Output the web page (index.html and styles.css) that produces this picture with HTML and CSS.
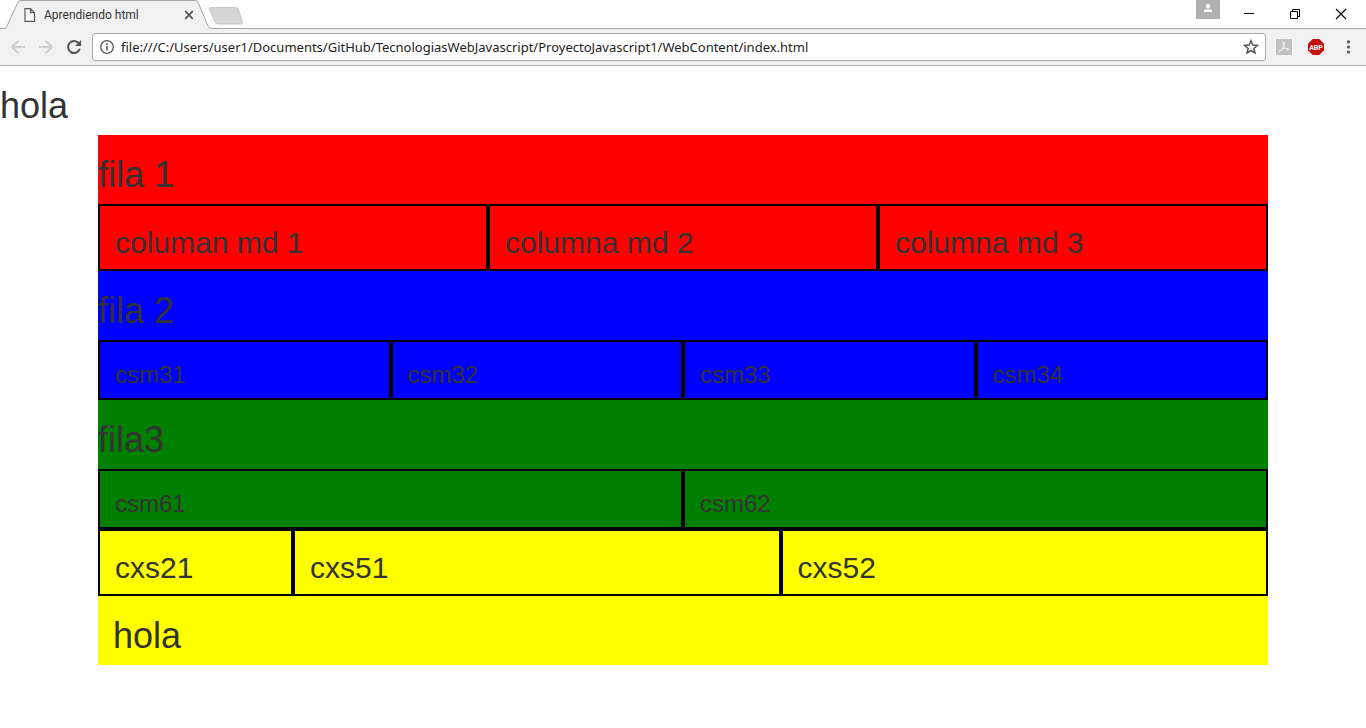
FILE: index.html
```
<!DOCTYPE html>
<html lang="es">
<head>
<meta charset="utf-8">
<title>Aprendiendo html</title>
<link rel="stylesheet" href="styles.css">
</head>
<body>
<header class="browser">
  <div class="tab-strip">
    <div class="tab">
      <svg class="tab-shape" viewBox="0 0 208 29" preserveAspectRatio="none" aria-hidden="true"><path d="M0 28.500C2 28.500 2.500 27 3 26L14 2Q15 .5 17 .5H191Q193 .5 194 2L204 26Q205 28.500 208 28.500V29H0Z" fill="#f1f1f1"/><path d="M0 28.500C2 28.500 2.500 27 3 26L14 2Q15 .5 17 .5H191Q193 .5 194 2L204 26Q205 28.500 208 28.500" fill="none" stroke="#a5a5a5"/></svg>
      <svg class="page-icon" width="12" height="14" viewBox="0 0 12 14" aria-hidden="true"><path d="M1 .7H6.500L10.500 4.700V13.300H1ZM6.500 .7V4.700H10.500" fill="#fafafa" stroke="#5a5a5a" stroke-width="1.200"/></svg>
      <span class="tab-title">Aprendiendo html</span>
      <button class="tab-close" aria-label="Cerrar pestaña"><svg width="10" height="10" viewBox="0 0 10 10"><path d="M1.200 1.200L8.800 8.800M8.800 1.200L1.200 8.800" stroke="#555" stroke-width="1.800"/></svg></button>
    </div>
    <button class="new-tab" aria-label="Nueva pestaña"><svg width="36" height="18" viewBox="0 0 36 18"><path d="M2.500 .5H27Q29.500 .5 30.300 2.500L34.500 15Q35 17 33 17H10Q8 17 7 15L1.500 2.500Q1 .5 2.500 .5Z" fill="#d5d5d5" stroke="#c6c6c6"/></svg></button>
    <div class="window-controls">
      <button class="profile" aria-label="Usuario"><svg width="24" height="19" viewBox="0 0 24 19"><circle cx="12" cy="6" r="2.200" fill="#fff"/><path d="M8 12V10.800Q8 9 12 9T16 10.800V12Z" fill="#fff"/></svg></button>
      <button class="win" aria-label="Minimizar"><svg width="12" height="12" viewBox="0 0 12 12"><path d="M1 5.500H11" stroke="#000"/></svg></button>
      <button class="win" aria-label="Restaurar"><svg width="12" height="12" viewBox="0 0 12 12"><path d="M1.500 3.500H8.500V10.500H1.500ZM3.500 3.500V1.500H10.500V8.500H8.500" fill="none" stroke="#000"/></svg></button>
      <button class="win" aria-label="Cerrar"><svg width="12" height="12" viewBox="0 0 12 12"><path d="M1 1L11 11M11 1L1 11" stroke="#000" stroke-width="1.100"/></svg></button>
    </div>
  </div>
  <div class="toolbar">
    <button class="tool" aria-label="Atrás"><svg width="16" height="16" viewBox="0 0 16 16"><path d="M15 8H2M8.500 1.500L2 8L8.500 14.500" fill="none" stroke="#d0d0d0" stroke-width="1.800"/></svg></button>
    <button class="tool" aria-label="Adelante"><svg width="16" height="16" viewBox="0 0 16 16"><path d="M1 8H14M7.500 1.500L14 8L7.500 14.500" fill="none" stroke="#d0d0d0" stroke-width="1.800"/></svg></button>
    <button class="tool" aria-label="Recargar"><svg width="16" height="16" viewBox="0 0 16 16"><path d="M12.800 4.300A6 6 0 1 0 13.800 9.800" fill="none" stroke="#555" stroke-width="2.100"/><path d="M15 1V7H9Z" fill="#555"/></svg></button>
    <div class="address">
      <svg width="16" height="16" viewBox="0 0 16 16" aria-hidden="true"><circle cx="8" cy="8" r="6.300" fill="none" stroke="#555" stroke-width="1.300"/><path d="M8 7V11.500M8 4.300V5.900" stroke="#555" stroke-width="1.600"/></svg>
      <input class="url" type="text" aria-label="Dirección" value="file:///C:/Users/user1/Documents/GitHub/TecnologiasWebJavascript/ProyectoJavascript1/WebContent/index.html">
      <button class="tool" aria-label="Añadir a marcadores"><svg width="16" height="16" viewBox="0 0 16 16"><path d="M8 1.800L9.800 6.100L14.400 6.400L10.900 9.400L12 14L8 11.500L4 14L5.100 9.400L1.600 6.400L6.200 6.100Z" fill="none" stroke="#555" stroke-width="1.500"/></svg></button>
    </div>
    <div class="extensions">
      <button class="tool" aria-label="Adobe Acrobat"><svg width="16" height="16" viewBox="0 0 16 16"><path d="M0 0H16V16H0Z" fill="#c2c2c2"/><path d="M7.500 3C9 3 8.200 6.500 6.500 9.500C5 12.300 3.300 13.500 3 12.500C2.800 11.300 6 9.800 9.500 9.500C12.500 9.200 13.500 10 13 10.700C12 11.800 9.500 9.800 8.200 7.500C6.900 5.300 6.500 3 7.500 3Z" fill="none" stroke="#f4f4f4"/></svg></button>
      <button class="tool" aria-label="Adblock Plus"><svg width="16" height="16" viewBox="0 0 16 16"><path d="M4.700 0H11.300L16 4.700V11.300L11.300 16H4.700L0 11.300V4.700Z" fill="#c50d0d"/><text x="8" y="11" text-anchor="middle" class="abp">ABP</text></svg></button>
      <button class="tool" aria-label="Menú"><svg width="16" height="16" viewBox="0 0 16 16"><g fill="#555"><circle cx="8.500" cy="2.800" r="1.600"/><circle cx="8.500" cy="8" r="1.600"/><circle cx="8.500" cy="13" r="1.600"/></g></svg></button>
    </div>
  </div>
</header>
<main class="page">
  <h1>hola</h1>
  <div class="container">
    <section class="red">
      <h1>fila 1</h1>
      <div class="row">
        <div class="col span-4"><h2>columan md 1</h2></div>
        <div class="col span-4"><h2>columna md 2</h2></div>
        <div class="col span-4"><h2>columna md 3</h2></div>
      </div>
    </section>
    <section class="blue">
      <h1>fila 2</h1>
      <div class="row">
        <div class="col span-3"><h3>csm31</h3></div>
        <div class="col span-3"><h3>csm32</h3></div>
        <div class="col span-3"><h3>csm33</h3></div>
        <div class="col span-3"><h3>csm34</h3></div>
      </div>
    </section>
    <section class="green">
      <h1>fila3</h1>
      <div class="row">
        <div class="col span-6"><h3>csm61</h3></div>
        <div class="col span-6"><h3>csm62</h3></div>
      </div>
    </section>
    <section class="yellow">
      <div class="row">
        <div class="col span-2"><h2>cxs21</h2></div>
        <div class="col span-5"><h2>cxs51</h2></div>
        <div class="col span-5"><h2>cxs52</h2></div>
      </div>
      <div class="plain"><h1>hola</h1></div>
    </section>
  </div>
</main>
</body>
</html>
```
FILE: styles.css
```
* { box-sizing: border-box; }

body {
  margin: 0;
  background: #fff;
  color: #333;
  font-family: "Liberation Sans", Arial, sans-serif;
}

button {
  display: flex;
  align-items: center;
  justify-content: center;
  padding: 0;
  border: 0;
  background: none;
}

svg { display: block; flex: none; }

/* Browser window */
.tab-strip {
  display: flex;
  height: 29px;
  padding-left: 4px;
  background: linear-gradient(#a5a5a5, #a5a5a5) bottom / 100% 1px no-repeat #fff;
}

.tab {
  position: relative;
  display: flex;
  align-items: center;
  width: 208px;
  padding: 0 18px 0 20px;
}

.tab-shape {
  position: absolute;
  inset: 0;
  width: 100%;
  height: 100%;
}

.page-icon, .tab-title, .tab-close { position: relative; }

.tab-title {
  flex: 1;
  padding-left: 8px;
  color: #333;
  font: 12px/16px Roboto, "Noto Sans", sans-serif;
  white-space: nowrap;
}

.new-tab { align-self: center; height: 18px; margin: 2px 0 0 -4px; }

.window-controls { display: flex; margin-left: auto; }

.profile {
  width: 24px;
  height: 19px;
  margin-right: 6px;
  background: #b0b0b0;
}

.win { width: 46px; height: 27px; }

.win:last-child { width: 48px; padding-right: 2px; }

.toolbar {
  display: flex;
  align-items: center;
  gap: 12px;
  height: 37px;
  padding: 0 10px;
  background: #f1f1f1;
  border-bottom: 1px solid #b0b0b0;
}

.address {
  display: flex;
  flex: 1;
  align-items: center;
  gap: 6px;
  height: 28px;
  margin-left: -2px;
  padding: 0 6px;
  background: #fff;
  border: 1px solid #a9a9a9;
  border-radius: 3px;
}

.url {
  flex: 1;
  min-width: 0;
  padding: 0;
  border: 0;
  outline: 0;
  background: none;
  color: #222;
  font: 13px/18px "Noto Sans", "Open Sans", sans-serif;
}

.extensions { display: flex; gap: 16px; margin-left: -2px; }

.abp {
  fill: #fff;
  font: bold 7px Roboto, "Liberation Sans", sans-serif;
}

/* Page content */
h1, h2, h3 { margin: 0; padding: 20px 0 10px; font-weight: 400; }
h1 { font-size: 36px; line-height: 39px; }
h2 { font-size: 30px; line-height: 33px; }
h3 { font-size: 24px; line-height: 26px; }

.container { max-width: 1170px; margin: 0 auto; }

.row { display: grid; grid-template-columns: repeat(12, minmax(0, 1fr)); }
.col { padding: 0 15px; border: 2px solid #000; }
.span-2 { grid-column: span 2; }
.span-3 { grid-column: span 3; }
.span-4 { grid-column: span 4; }
.span-5 { grid-column: span 5; }
.span-6 { grid-column: span 6; }
.plain { padding: 0 15px; }

.red { background: #f00; }
.blue { background: #00f; }
.green { background: #008000; }
.yellow { background: #ff0; }
```
